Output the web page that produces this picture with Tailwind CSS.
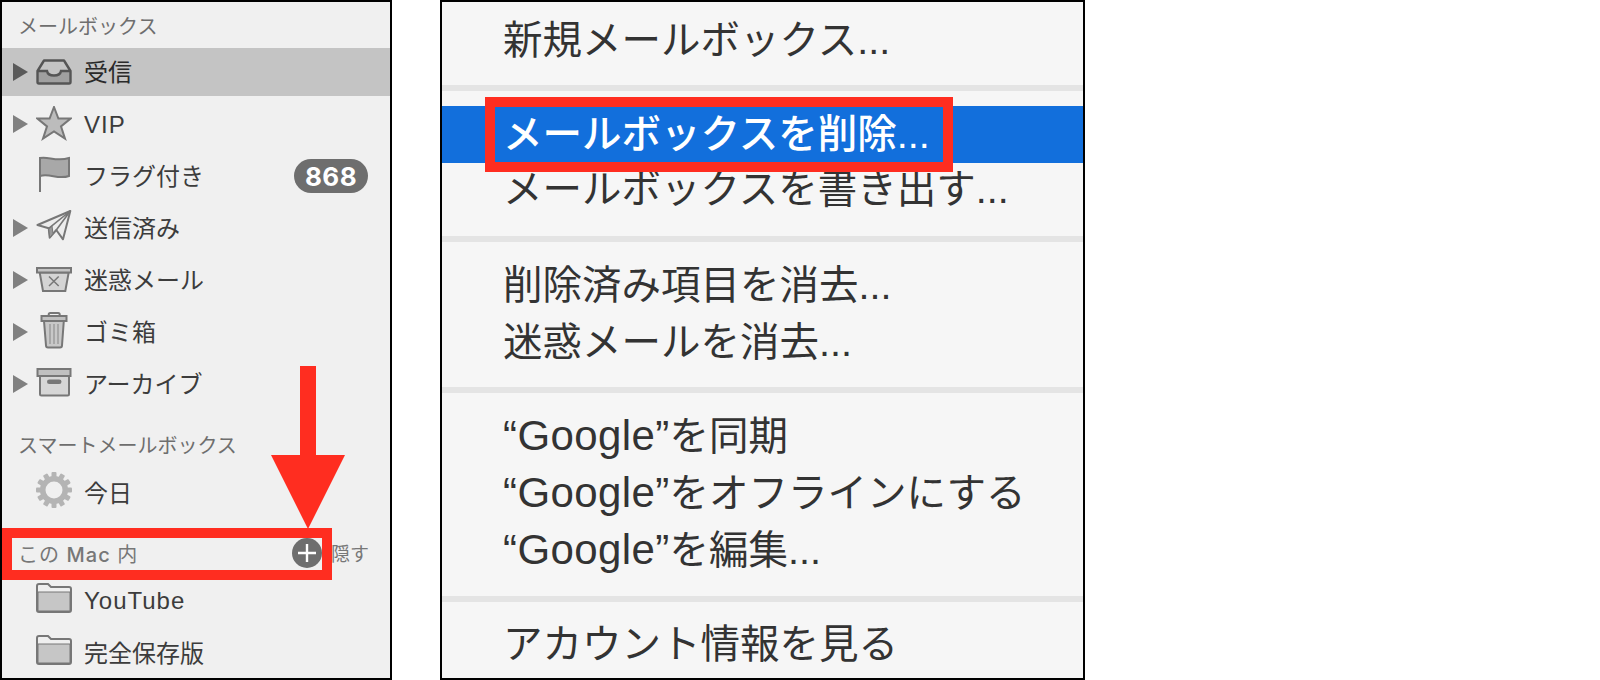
<!DOCTYPE html>
<html lang="ja">
<head>
<meta charset="utf-8">
<script src="https://cdn.jsdelivr.net/npm/@tailwindcss/browser@4"></script>
</head>
<body class="bg-white">
<div class="relative flex w-[1600px] h-[680px] overflow-hidden font-['Liberation_Sans','Noto_Sans_CJK_JP',sans-serif]">

  <aside class="w-[392px] h-[680px] shrink-0 border-2 border-black bg-[#f0f0f0] text-[#3c3c3c]">
    <div class="h-[44px] flex items-center pl-[16px] pt-[5px] text-[20px] text-[#6e6e6e]">メールボックス</div>

    <div class="h-[48px] my-[2px] flex items-center bg-[#c4c4c4] pl-[11px] text-[24px] text-[#2a2a2a]">
      <svg class="w-[15px] h-[18px]" viewBox="0 0 15 18"><path d="M0 0L15 9L0 18Z" fill="#5a5a5a"/></svg>
      <svg class="ml-[8px] w-[36px] h-[26px]" viewBox="0 0 36 26" fill="none"><path d="M1.5 12H11C12 18 24 18 25 12H34.5V24.5H1.5Z" fill="#a0a0a0"/><path d="M1.5 12L8 1.5H28L34.5 12V23A1.5 1.5 0 0 1 33 24.5H3A1.5 1.5 0 0 1 1.5 23Z" stroke="#555" stroke-width="2.4" stroke-linejoin="round"/><path d="M2 12H11C12 18 24 18 25 12H34" stroke="#555" stroke-width="2.4"/></svg>
      <span class="ml-[12px] pt-[2px]">受信</span>
    </div>

    <div class="h-[52px] flex items-center pl-[11px] text-[24px]">
      <svg class="w-[15px] h-[18px]" viewBox="0 0 15 18"><path d="M0 0L15 9L0 18Z" fill="#808080"/></svg>
      <svg class="ml-[8px] w-[36px] h-[36px]" viewBox="0 1 36 36"><path d="M18 2L22.4 13.6H34.6L25 21.4L29 33.6L18 26.4L7 33.6L11 21.4L1.4 13.6H13.6Z" fill="#bcbcbc" stroke="#777" stroke-width="2" stroke-linejoin="miter"/></svg>
      <span class="ml-[12px] pt-[2px] tracking-[1px]">VIP</span>
    </div>

    <div class="h-[52px] flex items-center pl-[34px] pr-[22px] text-[24px]">
      <svg class="w-[36px] h-[40px]" viewBox="0 0 36 40" fill="none"><path d="M4 2C12 0 20 6 33 2V20C22 24 14 17 4 20Z" fill="#a8a8a8" stroke="#777" stroke-width="2"/><path d="M4 1V36" stroke="#777" stroke-width="2"/></svg>
      <span class="ml-[12px] pt-[2px]">フラグ付き</span>
      <span class="ml-auto h-[34px] w-[74px] rounded-full bg-[#6e6e6e] text-white text-[26px] font-['Inter',sans-serif] font-bold tracking-[0.5px] flex items-center justify-center">868</span>
    </div>

    <div class="h-[52px] flex items-center pl-[11px] text-[24px]">
      <svg class="w-[15px] h-[18px]" viewBox="0 0 15 18"><path d="M0 0L15 9L0 18Z" fill="#808080"/></svg>
      <svg class="ml-[8px] w-[36px] h-[36px]" viewBox="0 0 36 36" fill="none" stroke="#777" stroke-width="2" stroke-linejoin="round"><path d="M34.3 1L1.5 15L12.7 18.3L13.7 27.7L20.3 20L27 29.3Z" fill="#ececec"/><path d="M12.7 18.3L13.7 27.7L17 23.7L16 16Z" fill="#999" stroke-width="1"/><path d="M34.3 1L12.7 18.3M34.3 1L20.3 20" stroke-width="1.6"/></svg>
      <span class="ml-[12px] pt-[2px]">送信済み</span>
    </div>

    <div class="h-[52px] flex items-center pl-[11px] text-[24px]">
      <svg class="w-[15px] h-[18px]" viewBox="0 0 15 18"><path d="M0 0L15 9L0 18Z" fill="#808080"/></svg>
      <svg class="ml-[8px] w-[36px] h-[26px]" viewBox="0 0 36 26" fill="none"><path d="M3.7 5.5L7 24H29.3L32.7 5.5Z" fill="#d4d4d4" stroke="#777" stroke-width="2"/><path d="M1 1H35V5.5H1Z" fill="#c4c4c4" stroke="#777" stroke-width="2"/><path d="M13 9.5L22.7 19M22.7 9.5L13 19" stroke="#777" stroke-width="1.5"/></svg>
      <span class="ml-[12px] pt-[2px]">迷惑メール</span>
    </div>

    <div class="h-[52px] flex items-center pl-[11px] text-[24px]">
      <svg class="w-[15px] h-[18px]" viewBox="0 0 15 18"><path d="M0 0L15 9L0 18Z" fill="#808080"/></svg>
      <svg class="ml-[8px] w-[36px] h-[40px]" viewBox="0 0 36 40" fill="none" stroke="#777" stroke-width="2"><path d="M12.7 4V2.5A1.5 1.5 0 0 1 14.2 1H22.2A1.5 1.5 0 0 1 23.7 2.5V4"/><path d="M8 9L10 33.5A2 2 0 0 0 12 35.5H24A2 2 0 0 0 26 33.5L27.8 9Z" fill="#c8c8c8"/><path d="M5.5 4H30.5V9H5.5Z" fill="#c0c0c0"/><path d="M14 12V32M18 12V32M22 12V32" stroke-width="1.4" stroke="#999"/></svg>
      <span class="ml-[12px] pt-[2px]">ゴミ箱</span>
    </div>

    <div class="h-[52px] flex items-center pl-[11px] text-[24px]">
      <svg class="w-[15px] h-[18px]" viewBox="0 0 15 18"><path d="M0 0L15 9L0 18Z" fill="#808080"/></svg>
      <svg class="ml-[8px] w-[36px] h-[32px]" viewBox="0 0 36 32" fill="none"><path d="M4 8H33V26A1.5 1.5 0 0 1 31.5 27.5H5.5A1.5 1.5 0 0 1 4 26Z" fill="#d6d6d6" stroke="#777" stroke-width="2"/><path d="M1.5 1H34.5V8H1.5Z" fill="#c0c0c0" stroke="#777" stroke-width="2"/><rect x="11" y="11.5" width="14.5" height="4.6" rx="2.3" fill="#777"/></svg>
      <span class="ml-[12px] pt-[2px]">アーカイブ</span>
    </div>

    <div class="mt-[15px] mb-[2px] h-[40px] flex items-center pl-[16px] pt-[2px] text-[20px] text-[#6e6e6e]">スマートメールボックス</div>

    <div class="h-[52px] flex items-center pl-[34px] text-[24px]">
      <svg class="w-[36px] h-[42px]" viewBox="0 0 36 42"><g fill="#b4b4b4"><circle cx="18" cy="18" r="14"/><rect x="15.5" y="0" width="5" height="36" rx="1"/><rect x="15.5" y="0" width="5" height="36" rx="1" transform="rotate(30 18 18)"/><rect x="15.5" y="0" width="5" height="36" rx="1" transform="rotate(60 18 18)"/><rect x="15.5" y="0" width="5" height="36" rx="1" transform="rotate(90 18 18)"/><rect x="15.5" y="0" width="5" height="36" rx="1" transform="rotate(120 18 18)"/><rect x="15.5" y="0" width="5" height="36" rx="1" transform="rotate(150 18 18)"/></g><circle cx="18" cy="18" r="8.5" fill="#f0f0f0"/></svg>
      <span class="ml-[12px] pt-[2px]">今日</span>
    </div>

    <div class="mt-[17px] mb-[4px] h-[34px] flex items-center pl-[16px] pr-[21px] pt-[3px] text-[#777]">
      <span class="text-[20px] tracking-[1px]">この <span class="font-['Inter',sans-serif] font-medium">Mac</span> 内</span>
      <span class="ml-auto pt-[2px] text-[19px]">隠す</span>
    </div>

    <div class="h-[52px] flex items-center pl-[34px] text-[24px]">
      <svg class="w-[36px] h-[34px]" viewBox="0 0 36 34" fill="none"><path d="M1 27V3A2 2 0 0 1 3 1H12L15 4H33A2 2 0 0 1 35 6V27A2 2 0 0 1 33 29H3A2 2 0 0 1 1 27Z" fill="#efefef" stroke="#777" stroke-width="2"/><path d="M2 9H34V27A1 1 0 0 1 33 28H3A1 1 0 0 1 2 27Z" fill="#c6c6c6" stroke="#777" stroke-width="1"/></svg>
      <span class="ml-[12px] pt-[2px] tracking-[1px]">YouTube</span>
    </div>
    <div class="h-[52px] flex items-center pl-[34px] text-[24px]">
      <svg class="w-[36px] h-[34px]" viewBox="0 0 36 34" fill="none"><path d="M1 27V3A2 2 0 0 1 3 1H12L15 4H33A2 2 0 0 1 35 6V27A2 2 0 0 1 33 29H3A2 2 0 0 1 1 27Z" fill="#efefef" stroke="#777" stroke-width="2"/><path d="M2 9H34V27A1 1 0 0 1 33 28H3A1 1 0 0 1 2 27Z" fill="#c6c6c6" stroke="#777" stroke-width="1"/></svg>
      <span class="ml-[12px] pt-[3px]">完全保存版</span>
    </div>
  </aside>

  <section class="ml-[48px] w-[645px] h-[680px] shrink-0 border-2 border-black bg-[#f6f6f6] text-[#333] text-[39.5px] leading-none flex flex-col">
    <div class="h-[83px] flex items-center pl-[61px] pb-[5px]">新規メールボックス...</div>
    <div class="h-[6px] bg-[#e4e4e4]"></div>
    <div class="mt-[15px] h-[57px] flex items-center pl-[61px] bg-[#126fdc] text-white font-medium">メールボックスを削除...</div>
    <div class="h-[57px] flex items-center pl-[61px] pb-[3px]">メールボックスを書き出す...</div>
    <div class="mt-[16px] h-[6px] bg-[#e4e4e4]"></div>
    <div class="mt-[15px] h-[57px] flex items-center pl-[61px]">削除済み項目を消去...</div>
    <div class="h-[57px] flex items-center pl-[61px]">迷惑メールを消去...</div>
    <div class="mt-[16px] h-[6px] bg-[#e4e4e4]"></div>
    <div class="mt-[15px] h-[57px] flex items-center pl-[61px] pb-[2px]"><span><span class="text-[42px] tracking-[0.4px]">“Google”</span>を同期</span></div>
    <div class="h-[57px] flex items-center pl-[61px] pb-[2px]"><span><span class="text-[42px] tracking-[0.4px]">“Google”</span>をオフラインにする</span></div>
    <div class="h-[57px] flex items-center pl-[61px] pb-[2px]"><span><span class="text-[42px] tracking-[0.4px]">“Google”</span>を編集...</span></div>
    <div class="mt-[17px] h-[6px] bg-[#e4e4e4]"></div>
    <div class="flex-1 flex items-center pl-[61px] pt-[10px]">アカウント情報を見る</div>
  </section>

  <!-- annotations over the content -->
  <div class="absolute left-[2px] top-[528px] w-[330px] h-[52px] border-[10px] border-[#ff2d20]"></div>
  <div class="absolute left-[292px] top-[538px] w-[30px] h-[30px] rounded-full bg-[#6e6e6e] flex items-center justify-center">
    <svg class="w-[20px] h-[20px]" viewBox="0 0 20 20"><path d="M10 1V19M1 10H19" stroke="#fff" stroke-width="2.4"/></svg>
  </div>
  <svg class="absolute left-[270px] top-[366px] w-[76px] h-[163px]" viewBox="0 0 76 163"><path d="M30 0H46V89H75L38 163L1 89H30Z" fill="#ff2d20"/></svg>
  <div class="absolute left-[485px] top-[97px] w-[468px] h-[75px] border-[10px] border-[#ff2d20]"></div>
</div>
</body>
</html>
